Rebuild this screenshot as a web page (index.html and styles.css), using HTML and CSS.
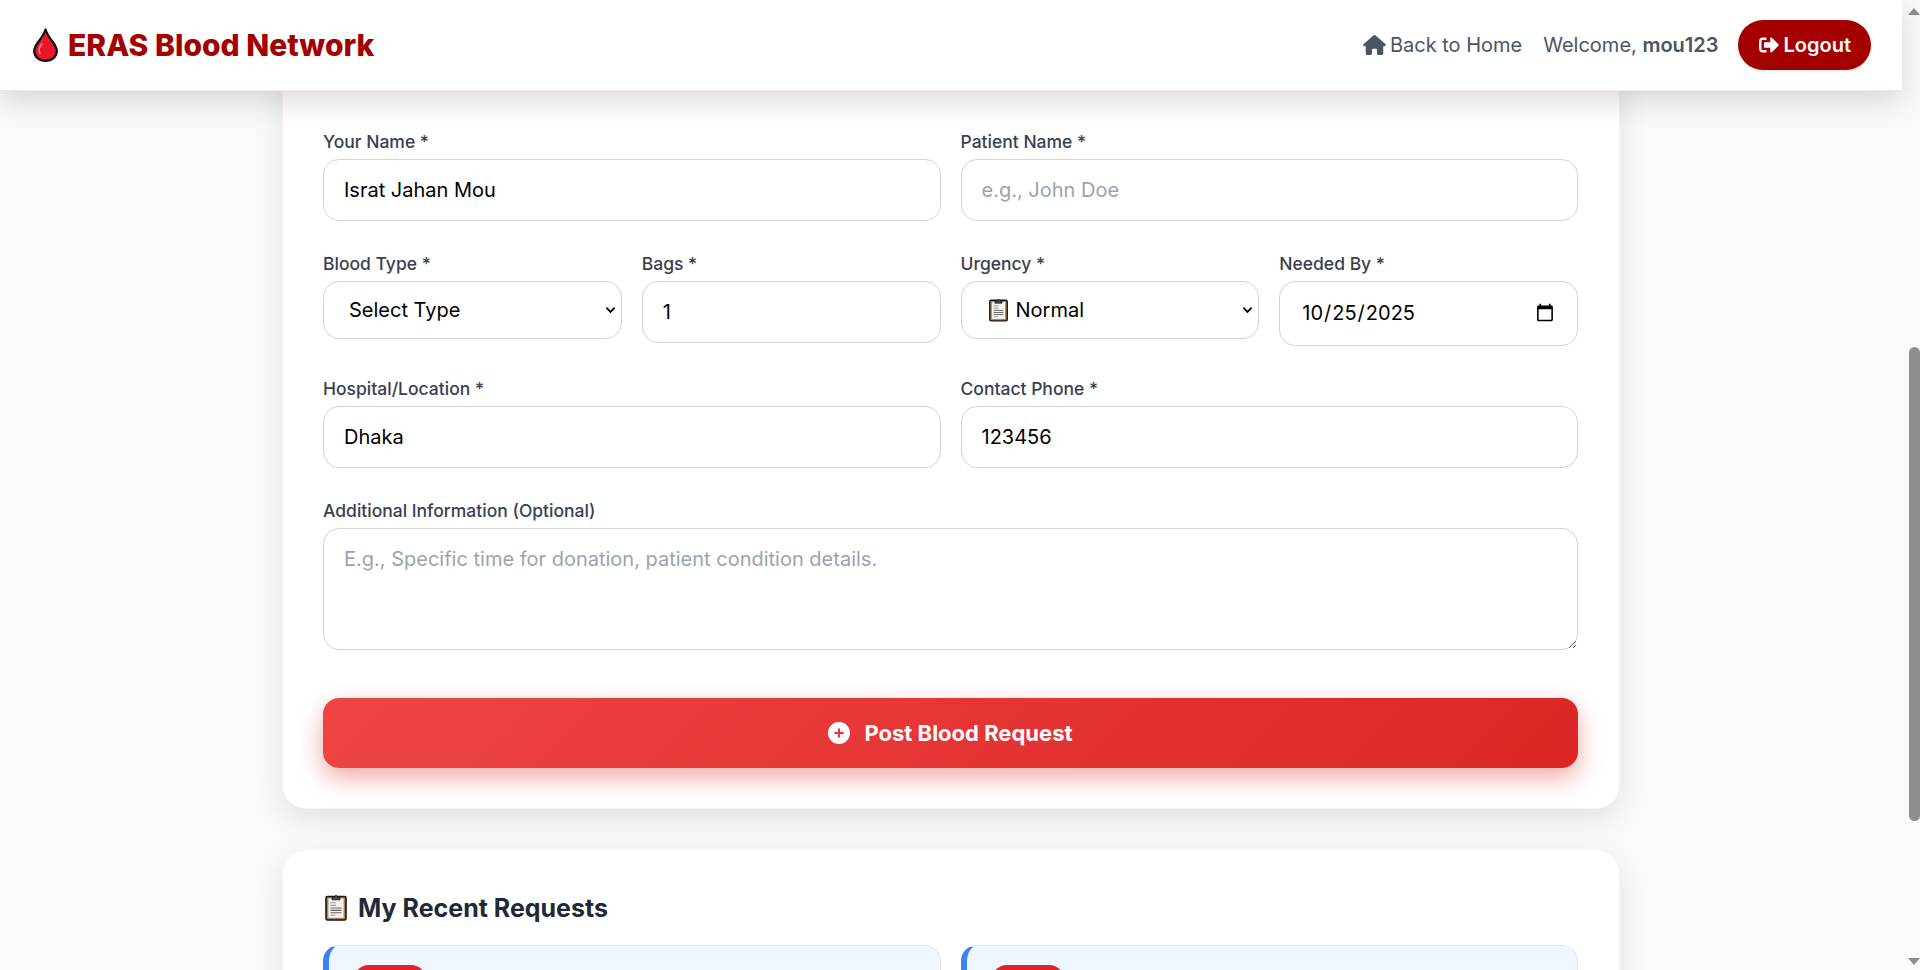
FILE: index.html
```html
<!DOCTYPE html>
<html lang="en">
<head>
    <meta charset="UTF-8">
    <meta name="viewport" content="width=device-width, initial-scale=1.0">
    <title>ERAS Blood Network</title>
    <link rel="stylesheet" href="styles.css">
</head>
<body>
    <svg class="icon-defs" aria-hidden="true">
        <symbol id="clipboard" viewBox="0 0 24 28">
            <rect x="2" y="3.5" width="20" height="23.5" rx="1.6" fill="#b08252" stroke="#161616" stroke-width="1.6"/>
            <rect x="4.4" y="5.4" width="15.2" height="19.4" fill="#f3f2ef"/>
            <path d="M8 6.8V4.4h2.4C10.6 1.8 13.4 1.8 13.6 4.4H16v2.4z" fill="#4a4a4a" stroke="#161616" stroke-width=".8"/>
            <path d="M6.5 9.8h5.5M6.5 12.4h5.5" stroke="#9a9a9a" stroke-width="1.1"/>
            <path d="M6.5 15h11M6.5 17.4h11M6.5 19.8h11" stroke="#666" stroke-width="1.1"/>
            <path d="M6.5 22.2h5" stroke="#9a9a9a" stroke-width="1.1"/>
        </symbol>
        <symbol id="chevron" viewBox="0 0 12 8">
            <path d="M1.5 1.5L6 6l4.5-4.5" fill="none" stroke="#000" stroke-width="2"/>
        </symbol>
    </svg>

    <div class="page">
        <div class="view">
            <header class="topbar">
                <a class="brand" href="#">
                    <svg class="brand-drop" viewBox="0 0 25 34" aria-hidden="true">
                        <path d="M12.5 1.5C11 6.5 8 10 5.5 13.5 3 17 1.2 19.8 1.2 23 1.2 28.8 6 32.8 12.5 32.8S23.8 28.8 23.8 23C23.8 19.8 22 17 19.5 13.5 17 10 14 6.5 12.5 1.5z" fill="#e91528" stroke="#111" stroke-width="2.2" stroke-linejoin="round"/>
                        <path d="M6.8 25.5C5.4 22 6.4 18.6 9 15.8" fill="none" stroke="#f58a8f" stroke-width="1.6" stroke-linecap="round"/>
                    </svg>
                    ERAS Blood Network
                </a>
                <nav class="topnav">
                    <a class="nav-link" href="#">
                        <svg class="nav-icon" viewBox="0 0 576 512" aria-hidden="true"><path d="M575.8 255.5c0 18-15 32.1-32 32.1h-32l.7 160.2c0 2.7-.2 5.4-.5 8.1V472c0 22.1-17.9 40-40 40H456c-1.1 0-2.2 0-3.3-.1c-1.4 .1-2.8 .1-4.2 .1H416 392c-22.1 0-40-17.9-40-40V448 384c0-17.7-14.3-32-32-32H256c-17.7 0-32 14.3-32 32v64 24c0 22.1-17.9 40-40 40H160 128.1c-1.5 0-3-.1-4.5-.2c-1.2 .1-2.4 .2-3.6 .2H104c-22.1 0-40-17.9-40-40V360c0-.9 0-1.9 .1-2.8V287.6H32c-18 0-32-14-32-32.1c0-9 3-17 10-24L266.4 8c7-7 15-8 22-8s15 2 21 7L564.8 231.5c8 7 12 15 11 24z"/></svg>
                        Back to Home
                    </a>
                    <span class="welcome">Welcome, <strong>mou123</strong></span>
                    <a class="logout" href="#">
                        <svg class="nav-icon logout-icon" viewBox="0 0 512 512" aria-hidden="true"><path d="M497 273L329 441c-15 15-41 4.5-41-17v-96H152c-13.3 0-24-10.7-24-24v-96c0-13.3 10.7-24 24-24h136V88c0-21.4 25.9-32 41-17l168 168c9.3 9.4 9.3 24.6 0 34zM192 436v-40c0-6.6-5.4-12-12-12H96c-17.7 0-32-14.3-32-32V160c0-17.7 14.3-32 32-32h84c6.6 0 12-5.4 12-12V76c0-6.6-5.4-12-12-12H96c-53 0-96 43-96 96v192c0 53 43 96 96 96h84c6.6 0 12-5.4 12-12z"/></svg>
                        Logout
                    </a>
                </nav>
            </header>

            <main class="content">
                <form class="card request-form">
                    <div class="row-two">
                        <div class="field">
                            <label>Your Name *</label>
                            <input class="control" type="text" value="Israt Jahan Mou">
                        </div>
                        <div class="field">
                            <label>Patient Name *</label>
                            <input class="control" type="text" placeholder="e.g., John Doe">
                        </div>
                    </div>

                    <div class="row-two">
                        <div class="row-two">
                            <div class="field">
                                <label>Blood Type *</label>
                                <div class="control select-box" role="combobox" aria-expanded="false">
                                    <span>Select Type</span>
                                    <svg class="chevron" aria-hidden="true"><use href="#chevron"/></svg>
                                </div>
                            </div>
                            <div class="field">
                                <label>Bags *</label>
                                <input class="control" type="number" value="1">
                            </div>
                        </div>
                        <div class="row-two">
                            <div class="field">
                                <label>Urgency *</label>
                                <div class="control select-box urgency" role="combobox" aria-expanded="false">
                                    <svg class="urgency-icon" aria-hidden="true"><use href="#clipboard"/></svg>
                                    <span>Normal</span>
                                    <svg class="chevron" aria-hidden="true"><use href="#chevron"/></svg>
                                </div>
                            </div>
                            <div class="field">
                                <label>Needed By *</label>
                                <input class="control date" type="date" value="2025-10-25">
                            </div>
                        </div>
                    </div>

                    <div class="row-two">
                        <div class="field">
                            <label>Hospital/Location *</label>
                            <input class="control" type="text" value="Dhaka">
                        </div>
                        <div class="field">
                            <label>Contact Phone *</label>
                            <input class="control" type="tel" value="123456">
                        </div>
                    </div>

                    <div class="field field-last">
                        <label>Additional Information (Optional)</label>
                        <textarea class="control notes" placeholder="E.g., Specific time for donation, patient condition details."></textarea>
                    </div>

                    <button class="submit" type="button">
                        <svg class="submit-icon" viewBox="0 0 512 512" aria-hidden="true"><path d="M256 512A256 256 0 1 0 256 0a256 256 0 1 0 0 512zM232 344V280H168c-13.3 0-24-10.7-24-24s10.7-24 24-24h64V168c0-13.3 10.7-24 24-24s24 10.7 24 24v64h64c13.3 0 24 10.7 24 24s-10.7 24-24 24H280v64c0 13.3-10.7 24-24 24s-24-10.7-24-24z"/></svg>
                        Post Blood Request
                    </button>
                </form>

                <section class="card recent">
                    <h2 class="recent-title">
                        <svg class="recent-icon" aria-hidden="true"><use href="#clipboard"/></svg>
                        My Recent Requests
                    </h2>
                    <div class="row-two">
                        <div class="request-item"><span class="badge"></span></div>
                        <div class="request-item"><span class="badge"></span></div>
                    </div>
                </section>
            </main>
        </div>

        <aside class="scrollbar" aria-hidden="true">
            <span class="arrow arrow-up"></span>
            <span class="thumb"></span>
            <span class="arrow arrow-down"></span>
        </aside>
    </div>
</body>
</html>
```

FILE: styles.css
```css
* {
    box-sizing: border-box;
}

html, body {
    height: 100%;
    margin: 0;
}

body {
    background: #f9fafb;
    color: #1f2937;
    font-family: Inter, "Noto Sans", sans-serif;
    overflow: hidden;
}

.icon-defs {
    display: none;
}

.page {
    display: flex;
    height: 100vh;
}

.view {
    flex: 1;
    min-width: 0;
    display: flex;
    flex-direction: column;
}

/* top bar */
.topbar {
    flex: none;
    height: 91px;
    padding: 0 31px 0 33px;
    display: flex;
    align-items: center;
    justify-content: space-between;
    background: #fff;
    border-bottom: 1px solid rgba(170, 0, 0, 0.1);
    box-shadow: 0 10px 30px rgba(0, 0, 0, 0.15);
    position: relative;
    z-index: 2;
}

.brand {
    display: flex;
    align-items: center;
    gap: 10px;
    color: #a50000;
    font-size: 30px;
    font-weight: 800;
    text-decoration: none;
}

.brand-drop {
    width: 25px;
    height: 34px;
}

.topnav {
    display: flex;
    align-items: center;
    gap: 20px;
    font-size: 20px;
    color: #4b5563;
}

.nav-link {
    display: flex;
    align-items: center;
    gap: 4px;
    margin-right: 1px;
    color: #4b5563;
    text-decoration: none;
}

.nav-icon {
    width: 23px;
    height: 20px;
    fill: currentColor;
}

.logout-icon {
    width: 22px;
}

.welcome {
    margin-right: -1px;
}

.welcome strong {
    font-weight: 600;
}

.logout {
    display: flex;
    align-items: center;
    gap: 4px;
    height: 50px;
    padding: 0 20px;
    border-radius: 25px;
    background: #a50000;
    color: #fff;
    font-weight: 600;
    text-decoration: none;
    box-shadow: 0 1px 3px rgba(0, 0, 0, 0.1);
}

/* content */
.content {
    flex: 1;
    min-height: 0;
    overflow: hidden;
    display: flex;
    flex-direction: column;
    align-items: center;
    gap: 40px;
}

.card {
    width: 1338px;
    flex: none;
    background: #fff;
    border: 1px solid rgba(170, 0, 0, 0.05);
    border-radius: 24px;
    padding: 0 41px 0 40px;
    box-shadow: 0 10px 30px rgba(0, 0, 0, 0.1);
}

.request-form {
    margin-top: -20px;
    padding-top: 59.2px;
    padding-bottom: 40px;
    border-radius: 0 0 24px 24px;
}

.row-two {
    display: grid;
    grid-template-columns: 1fr 1fr;
    column-gap: 20px;
    align-items: start;
}

.field {
    margin-bottom: 31.8px;
}

.field-last {
    margin-bottom: 0;
}

.field label {
    display: block;
    margin-bottom: 7px;
    font-size: 17.5px;
    line-height: 21px;
    font-weight: 500;
    color: #374151;
}

.control {
    display: block;
    width: 100%;
    height: 62px;
    padding: 18px 20px;
    border: 1px solid #d1d5db;
    border-radius: 16px;
    background: #fff;
    color: #000;
    font-family: inherit;
    font-size: 20px;
}

.control::placeholder {
    color: #9ca3af;
}

.select-box {
    height: 58px;
    padding: 0 4px 0 25px;
    display: flex;
    align-items: center;
    gap: 8px;
}

.urgency {
    padding-left: 26px;
    gap: 7px;
}

.urgency-icon {
    width: 21px;
    height: 25px;
}

.chevron {
    width: 11px;
    height: 8px;
    margin-left: auto;
    margin-right: 1px;
}

.date {
    height: 65px;
    padding-left: 21px;
}

.notes {
    height: 122px;
    resize: vertical;
}

.submit {
    display: flex;
    align-items: center;
    justify-content: center;
    gap: 14px;
    width: 100%;
    height: 70px;
    margin-top: 48.2px;
    border: 0;
    border-radius: 16px;
    background: linear-gradient(135deg, #ef4444, #dc2626);
    color: #fff;
    font-family: inherit;
    font-size: 22px;
    font-weight: 700;
    box-shadow: 0 10px 25px rgba(220, 38, 38, 0.4);
}

.submit-icon {
    width: 22px;
    height: 22px;
    fill: #fff;
}

.recent {
    padding-top: 41px;
    padding-bottom: 40px;
}

.recent-title {
    display: flex;
    align-items: flex-start;
    gap: 10px;
    margin: 0 0 20px;
    font-size: 25px;
    line-height: 34px;
    font-weight: 700;
    color: #1f2937;
}

.recent-icon {
    width: 24px;
    height: 28px;
    margin: 2px 0 0 1px;
}

.request-item {
    height: 220px;
    padding: 19px 24px;
    background: #eff6ff;
    border: 1px solid #e5e7eb;
    border-left: 6px solid #3b82f6;
    border-radius: 16px;
}

.badge {
    display: block;
    width: 74px;
    height: 32px;
    border-radius: 16px;
    background: #dc2626;
}

/* window scrollbar */
.scrollbar {
    flex: none;
    width: 18px;
    padding: 8px 0 5px;
    display: flex;
    flex-direction: column;
    align-items: flex-end;
    background: #fafafa;
}

.arrow {
    flex: none;
    width: 0;
    height: 0;
    border-left: 6px solid transparent;
    border-right: 6px solid transparent;
}

.arrow-up {
    border-bottom: 7px solid #8d8d8d;
}

.arrow-down {
    margin-top: auto;
    border-top: 7px solid #8d8d8d;
}

.thumb {
    flex: none;
    width: 11px;
    height: 474px;
    margin-top: 332px;
    border-radius: 6px;
    background: #8d8d8d;
}
```
